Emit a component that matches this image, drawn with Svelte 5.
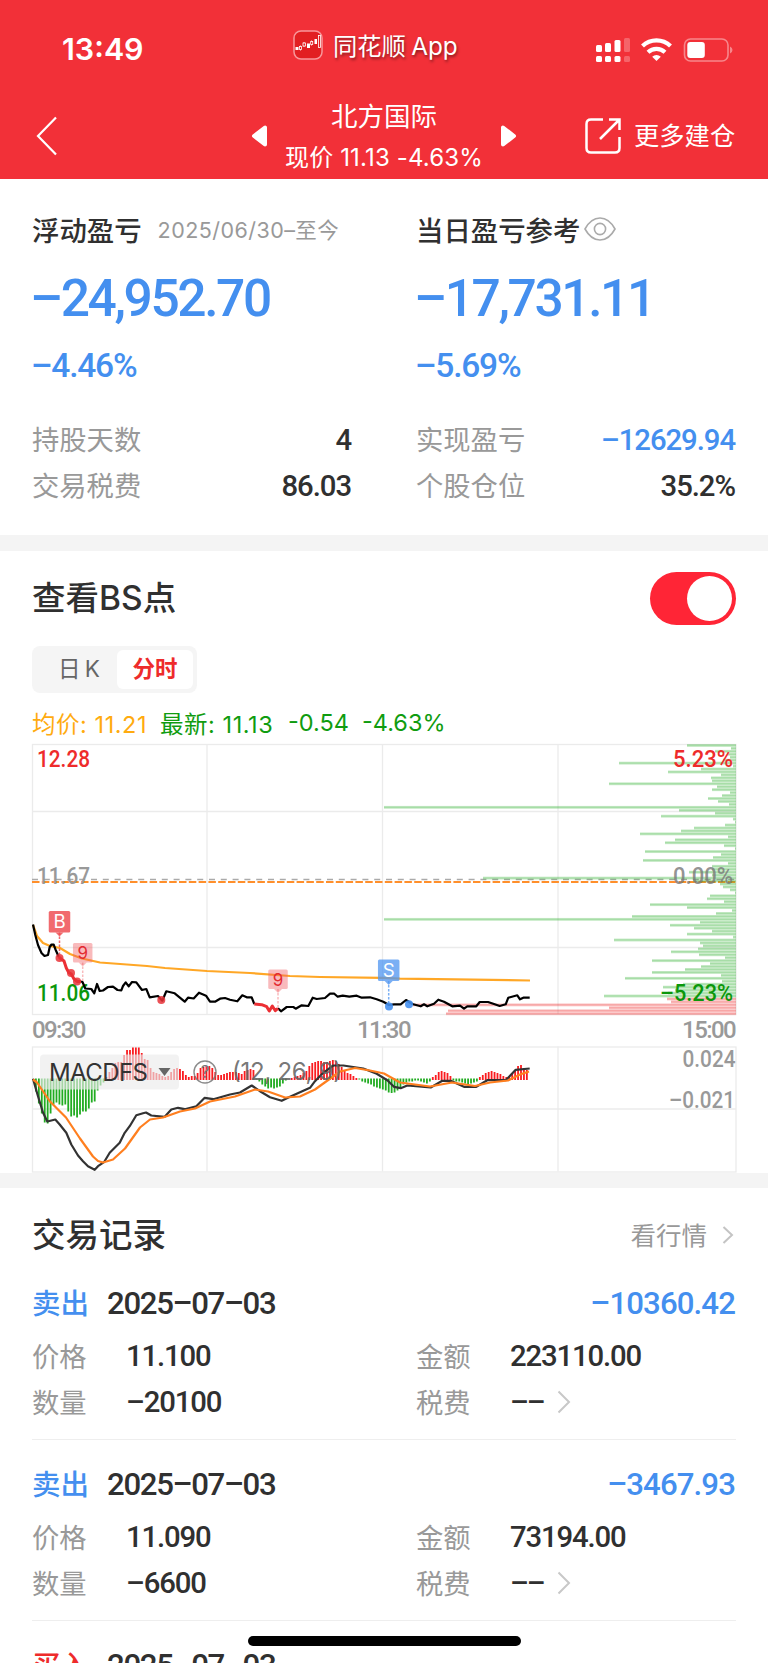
<script lang="ts">
    let bsOn = $state(true);
    let period = $state('分时');

    const summary = [
        { title: '浮动盈亏', range: '2025/06/30–至今', amount: '–24,952.70', rate: '–4.46%' },
        { title: '当日盈亏参考', range: '', amount: '–17,731.11', rate: '–5.69%' },
    ];

    const stats = [
        { label: '持股天数', value: '4', loss: false },
        { label: '实现盈亏', value: '–12629.94', loss: true },
        { label: '交易税费', value: '86.03', loss: false },
        { label: '个股仓位', value: '35.2%', loss: false },
    ];

    const records = [
        { side: '卖出', date: '2025–07–03', profit: '–10360.42', price: '11.100', amount: '223110.00', count: '–20100' },
        { side: '卖出', date: '2025–07–03', profit: '–3467.93', price: '11.090', amount: '73194.00', count: '–6600' },
        { side: '买入', date: '2025–07–03', profit: '', price: '', amount: '', count: '' },
    ];

    // volume at each price level, top to bottom
    const levels = [
        49, 5, 21, 9, 6, 13, 117, 3, 35, 68, 15, 25, 24, 127, 19, 24, 6, 14, 28, 18, 7, 352, 57, 21, 75, 3, 1, 11, 42, 55,
        96, 8, 61, 71, 12, 1, 91, 15, 23, 93, 8, 24, 24, 47, 24, 253, 43, 16, 13, 6, 1, 26, 29, 12, 86, 49, 4, 20, 104,
        352, 36, 66, 42, 24, 49, 3, 122, 36, 33, 38, 65, 37, 11, 84, 26, 35, 51, 84, 15, 111, 14, 53, 73, 61, 68, 132,
        69, 65, 323, 127, 288, 290,
    ];
    const firstRedLevel = 86;

    const macd = [
        -13, -25, -35, -44, -45, -35, -26, -24, -26, -27, -26, -33, -38, -37, -39, -36, -33, -33, -30, -24, -23, -12, -7, -4,
        3, 8, 12, 17, 18, 18, 25, 30, 30, 32.5, 32.5, 32.5, 27, 21, 20, 12, 8, 7, 6, 4, 3, 4, 8, 11, 12, 11, 9, 5, 3, 4, 4,
        7, 12, 13, 14, 14, 12, 8, 5, 5, 6, 7, 8, 8, 8, 7, 6, 9, 10, 11, 10, -1, -3, -6, -8, -10, -9, -10, -9, -8, -5, -2, 0,
        2, 3, 4, 5, 7, 9, 14, 17, 18, 19, 19, 18, 18, 19, 20, 19, 16, 13, 9, 7, 6, 4, 2, -1, -3, -4, -5, -6, -8, -9, -10,
        -11, -12, -14, -14.5, -14, -12, -9, -6, -4, -3, -3, -2, -2, -3, -4, -5, -3, 3, 5, 8, 9, 8, 7, 4, -2, -3, -3, -4,
        -5, -6, -5, -4, -3, 3, 5, 7, 8, 9, 8, 7, 6, 4, 3, 3, 7, 10, 14, 15, 12, 10,
    ];

    const priceStart = '33,924.5 35.3,935 38,945 41.5,953 44.5,956 48,955 49.7,947 51.5,944.5 53.7,944.7 55.5,949.5 58.7,956.7';
    const priceDrop = '58.7,956.7 60.5,958.5 64,961 66.3,968 68.7,972.5 71.3,974 74,979 77.3,981.5 81,981.5';
    const priceMid =
        '81,981.5 82.5,982 85.3,988.5 91.3,989 94.3,993.3 97,984 99.7,991 103,990.5 108,987 113,986.7 117.5,990 121.3,990.3 123,986 125.7,982.3 128.7,986.3 132,982 136.3,982.3 142,990 146.3,989 149.7,997.3 158,996 162.3,1000.7 166.3,991.3 174.7,993.3 184.7,1001.7 188,997.7 193.7,998.5 199,992.7 206,995.7 210,1001.7 215,1001.7 220,998.7 225,998 230,999.7 237.3,1001.3 242.3,995.3 246.7,997.3 251.7,997.3 254.3,1004';
    const priceLow = '254.3,1004 261.7,1004.7 266.7,1006.7 269.3,1011 272.3,1006 275.3,1010.7 278,1008.3';
    const priceEnd =
        '278,1008.3 281,1011.3 286.7,1007 293.3,1007 295.7,1008.7 301.7,1005.3 308.3,1006 312.7,997.7 316.7,999 325,998 330,993.7 334.3,993.7 337.7,996.7 342.7,995.7 349.3,996.7 356.7,995.7 361.7,997.7 370,997.3 376.7,999.3 383.3,1001.7 389,1005 394,1004.3 400.7,1004.3 406,1000 412.3,1004 420.7,1006.3 424,1004.3 427.3,1006.3 434,1003.7 438.3,999.7 444,1001.7 452.3,1006.3 460,1005.7 464,1008.7 467.3,1006.3 476.3,1006.3 479.7,1002 488,1002 494,1004 499.7,1006 505.7,1004.3 508.3,997.7 517.3,995.3 520,999.3 523.3,997.7 529.7,997.7';
    const average =
        '33,925 37,936 43,943 50,946 60,948 70,954 82,958.5 100,962.5 147,966 165,968 207,971 250,973 290,976 320,977 382,977.8 400,978.7 530,980.5';
    const dif =
        '33,1079.3 38,1096.7 43,1113 47.3,1122 55.3,1120 59.7,1125 66.3,1133.3 71.3,1145 78,1156 83,1161.7 88,1166.7 94.7,1170.3 98,1166.7 104,1162.7 109.7,1153.3 119.7,1143.3 124.7,1133.3 129.7,1126.7 136.3,1115.7 143,1113.7 146,1113 151.3,1116 164.7,1117.3 171.3,1110 178,1108.3 184.7,1109.7 196.3,1106.7 204.7,1098.3 213.3,1099.7 230,1095 240,1093 251.7,1086 260,1091.7 270,1097.7 281.7,1101.3 290,1097.3 310,1088.3 315,1081.7 323.3,1073.3 333.3,1066 343.3,1066 363.3,1069 376.7,1074.3 387.3,1080.7 394,1087.3 400.7,1088.7 407.3,1086 430.7,1088 442.3,1081.3 450.7,1081.3 464,1087.3 476.3,1087.3 487.3,1080.7 505.7,1080.7 515.7,1070.3 529.7,1069';
    const dea =
        '33,1080 37,1083 50,1102 66,1118 80,1139 93,1157 98,1161.5 103,1163 113,1160 125,1149 140,1128 150,1120 163,1118 180,1112 195,1109 210,1102 235,1097 255,1090 268,1092 285,1098 300,1097 315,1090 340,1072 355,1068.5 370,1071 384,1074 400,1083 430,1087 452,1083 475,1086.5 490,1083 508,1081 520,1075 529,1072';
</script>

{#snippet flag(x, y, size, color, textColor, label, end)}
    <line x1={x} x2={x} y1={y + size} y2={end} stroke={color} stroke-width="1.5" stroke-dasharray="2.5 1.5" />
    <rect x={x - size / 2} {y} width={size} height={size} rx="1.5" fill={color} />
    <path d="M{x - 4} {y + size}h8l-4 4z" fill={color} />
    <text {x} y={y + size / 2 + 6.5} text-anchor="middle" font-size={size * 0.87} fill={textColor}>{label}</text>
{/snippet}

<div class="page">
    <header>
        <div class="status">
            <span class="time">13:49</span>
            <div class="app">
                <svg width="30" height="30" viewBox="0 0 30 30">
                    <rect x="1" y="1" width="28" height="28" rx="7" fill="#e21f22" stroke="#f8979a" stroke-width="1.5" />
                    <g fill="#fff">
                        <rect x="2.5" y="17" width="3" height="3" />
                        <rect x="14" y="13.5" width="3" height="4.5" />
                        <rect x="21.5" y="9" width="2.5" height="5" />
                    </g>
                    <g fill="none" stroke="#fff" stroke-width=".8">
                        <path d="M7.5 15.5v5M11 12v5M18.5 10.5v5" />
                        <rect x="6.5" y="16.5" width="2" height="3" fill="#e21f22" />
                        <rect x="10" y="13" width="2.5" height="3" fill="#e21f22" />
                        <rect x="17.7" y="11.5" width="2" height="3" fill="#e21f22" />
                        <rect x="25.5" y="5.5" width="2" height="12" />
                    </g>
                </svg>
                <span>同花顺 App</span>
            </div>
            <svg class="signals" width="138" height="26" viewBox="594 36 138 26">
                <g fill="#fff">
                    <rect x="595" y="44" width="6" height="7" rx="1.5" />
                    <rect x="604" y="42" width="6" height="9" rx="1.5" />
                    <rect x="613.5" y="39" width="6" height="12" rx="1.5" />
                    <rect x="595" y="55" width="6" height="6" rx="1.5" />
                    <rect x="604" y="55" width="6" height="6" rx="1.5" />
                    <rect x="613.5" y="55" width="6" height="6" rx="1.5" />
                    <g opacity=".25">
                        <rect x="623" y="37" width="6" height="14" rx="1.5" />
                        <rect x="623" y="55" width="6" height="6" rx="1.5" />
                    </g>
                    <path d="M655.5 60l-4.3-4.300a6.5 6.5 0 0 1 8.6 0z" />
                    <rect x="686.3" y="41" width="17.5" height="16" rx="3" />
                </g>
                <path d="M641.5 45a20.3 20.3 0 0 1 28 0M647 51.2a12.5 12.5 0 0 1 17 0" fill="none" stroke="#fff" stroke-width="4.2" />
                <rect x="683.5" y="38" width="43.5" height="22" rx="6" fill="none" stroke="#fff" stroke-opacity=".42" stroke-width="1.6" />
                <path d="M729 45.5v7q2.5-1 2.5-3.500t-2.500-3.500z" fill="#fff" opacity=".42" />
            </svg>
        </div>
        <nav>
            <svg class="back" width="24" height="42" viewBox="0 0 24 42"><path d="M21 2.5L3 21l18 18.5" fill="none" stroke="#fff" stroke-width="2.2" /></svg>
            <div class="stock">
                <svg width="18" height="24" viewBox="0 0 18 24"><path d="M14 3.500v17L3 12z" fill="#fff" stroke="#fff" stroke-width="4" stroke-linejoin="round" /></svg>
                <div class="name">
                    <div class="title">北方国际</div>
                    <div class="quote">现价 11.13 -4.63%</div>
                </div>
                <svg width="18" height="24" viewBox="0 0 18 24"><path d="M4 3.500v17L15 12z" fill="#fff" stroke="#fff" stroke-width="4" stroke-linejoin="round" /></svg>
            </div>
            <div class="more">
                <svg width="38" height="38" viewBox="0 0 38 38" fill="none" stroke="#fff" stroke-width="2.5">
                    <path d="M19 2.500H7Q2.500 2.500 2.500 7v24q0 4.500 4.500 4.500h24q4.500 0 4.500-4.500V20M25 2.500h10.500V13M35 3L16 22" />
                </svg>
                <span>更多建仓</span>
            </div>
        </nav>
    </header>

    <section class="summary">
        <div class="cols">
            {#each summary as item}
                <div class="card">
                    <div class="head">
                        <b>{item.title}</b>
                        {#if item.range}
                            <span>{item.range}</span>
                        {:else}
                            <svg width="32" height="24" viewBox="0 0 32 24" fill="none" stroke="#aaa" stroke-width="1.6">
                                <path d="M1 12Q7 1 16 1t15 11Q25 23 16 23T1 12z" />
                                <circle cx="16" cy="12" r="5.6" />
                            </svg>
                        {/if}
                    </div>
                    <div class="amount">{item.amount}</div>
                    <div class="rate">{item.rate}</div>
                </div>
            {/each}
        </div>
        <div class="stats">
            {#each stats as item}
                <div class="stat">
                    <span class="label">{item.label}</span>
                    <span class="num" class:loss={item.loss}>{item.value}</span>
                </div>
            {/each}
        </div>
    </section>

    <section class="chart">
        <div class="chart-head">
            <h2>查看BS点</h2>
            <button class="toggle" class:on={bsOn} aria-label="BS" onclick={() => (bsOn = !bsOn)}><i></i></button>
        </div>
        <div class="tabs">
            {#each ['日 K', '分时'] as tab}
                <button class:active={period === tab} onclick={() => (period = tab)}>{tab}</button>
            {/each}
        </div>
        <div class="legend">
            <span class="avg">均价: 11.21</span>
            <span class="last">最新: 11.13</span>
            <span class="diff">-0.54</span>
            <span>-4.63%</span>
        </div>

        <svg class="plot" width="706" height="272" viewBox="31 744 706 272">
            <g fill="none" stroke="#ebebeb" stroke-width="1.3">
                <rect x="32.5" y="744.5" width="703.5" height="270" />
                <path d="M207 744v271M382.5 744v271M558 744v271M32 811.5h704M32 947.5h704" />
            </g>
            <line x1="32" x2="736" y1="879.5" y2="879.5" stroke="#aaa" stroke-width="1.7" stroke-dasharray="6 5.8" />
            <line x1="32" x2="736" y1="882" y2="882" stroke="#ff8f2b" stroke-width="2" stroke-dasharray="7.5 2.3" />
            {#each levels as width, i}
                <g fill={i < firstRedLevel ? '#32b032' : '#ef3030'}>
                    <rect x={736 - width} y={744 + i * 2.948} {width} height="2.9" opacity=".27" />
                    <rect x={736 - width} y={744.7 + i * 2.948} {width} height="1.4" opacity=".22" />
                </g>
            {/each}
            <g class="axis" font-size="24">
                <text x="37" y="767" textLength="53" lengthAdjust="spacingAndGlyphs" fill="#ee2b2b">12.28</text>
                <text x="37" y="884" textLength="53" lengthAdjust="spacingAndGlyphs" fill="#999">11.67</text>
                <text x="37" y="1000.5" textLength="53" lengthAdjust="spacingAndGlyphs" fill="#0b970b">11.06</text>
                <text x="673" y="767" textLength="60" lengthAdjust="spacingAndGlyphs" fill="#ee2b2b">5.23%</text>
                <text x="673" y="884" textLength="60" lengthAdjust="spacingAndGlyphs" fill="#777" fill-opacity=".8">0.00%</text>
                <text x="660" y="1000.5" textLength="73" lengthAdjust="spacingAndGlyphs" fill="#0b970b">–5.23%</text>
            </g>
            <polyline class="line" points={average} stroke="#ffa726" />
            <g class="line" stroke="#000">
                <polyline points={priceStart} />
                <polyline points={priceMid} />
                <polyline points={priceEnd} />
            </g>
            <g class="line red" stroke="#ec2f34">
                <polyline points={priceDrop} />
                <polyline points={priceLow} />
            </g>
            <g fill="#e73338" fill-opacity=".85">
                <circle cx="59.5" cy="958" r="4" />
                <circle cx="71" cy="973" r="4" />
                <circle cx="77" cy="981.5" r="4" />
                <circle cx="161.3" cy="1000" r="4" />
            </g>
            <g fill="#4590ef" fill-opacity=".9">
                <circle cx="389" cy="1006.5" r="4" />
                <circle cx="409" cy="1004.3" r="4" />
            </g>
            {#if bsOn}
                {@render flag(59.5, 911, 21.5, 'rgba(238,78,82,.84)', '#fff', 'B', 955)}
                {@render flag(82.7, 943, 19.5, 'rgba(240,90,95,.42)', '#e32a30', '9', 981)}
                {@render flag(278, 969.5, 19.5, 'rgba(240,90,95,.42)', '#e32a30', '9', 1008)}
                {@render flag(388.7, 959.5, 21.5, 'rgba(80,150,240,.76)', '#fff', 'S', 1003)}
            {/if}
        </svg>

        <div class="times"><span>09:30</span><span>11:30</span><span>15:00</span></div>

        <svg class="plot" width="706" height="127" viewBox="31 1046.5 706 127">
            <g fill="none" stroke="#ebebeb" stroke-width="1.3">
                <rect x="32.5" y="1047.5" width="703.5" height="125" />
                <path d="M207 1047v125M382.5 1047v125M558 1047v125M32 1109.5h704" />
            </g>
            {#each macd as v, i}
                <rect x={35 + i * 2.94} y={v > 0 ? 1080.5 - v : 1079} width="1.8" height={Math.abs(v)} fill={v > 0 ? '#fa1c20' : '#22ac22'} />
            {/each}
            <rect x="40" y="1055" width="139" height="35" rx="4" fill="#ebebeb" fill-opacity=".65" />
            <polyline class="line" points={dif} stroke="#333" />
            <polyline class="line" points={dea} stroke="#ff7f1f" />
            <text x="49" y="1081" font-size="24" textLength="99" fill="#333">MACDFS</text>
            <path d="M158.500 1068.500h12l-6 8z" fill="#666" />
            <circle cx="205" cy="1072.5" r="11" fill="none" stroke="#777" stroke-opacity=".85" stroke-width="1.4" />
            <text x="205" y="1078.5" font-size="17" text-anchor="middle" fill="#777">?</text>
            <text x="232" y="1080.5" font-size="24" textLength="110" fill="#666" fill-opacity=".9">(12, 26, 9)</text>
            <g class="axis" font-size="24" fill="#999">
                <text x="682.5" y="1067" textLength="53" lengthAdjust="spacingAndGlyphs">0.024</text>
                <text x="669" y="1108" textLength="66" lengthAdjust="spacingAndGlyphs">–0.021</text>
            </g>
        </svg>
    </section>

    <section class="records">
        <div class="records-head">
            <h2>交易记录</h2>
            <span class="link">
                看行情
                <svg width="12" height="20" viewBox="0 0 12 20"><path d="M1.500 2l8.500 8-8.500 8" fill="none" stroke="#c4c4c4" stroke-width="2" /></svg>
            </span>
        </div>
        {#each records as r}
            <article>
                <div class="deal">
                    <span class="side" class:buy={r.side === '买入'}>{r.side}</span>
                    <span class="date">{r.date}</span>
                    <span class="profit">{r.profit}</span>
                </div>
                {#if r.price}
                    <div class="fields">
                        <span>价格</span><b>{r.price}</b>
                        <span>金额</span><b>{r.amount}</b>
                        <span>数量</span><b>{r.count}</b>
                        <span>税费</span>
                        <b class="fee">––<svg width="14" height="24" viewBox="0 0 14 24"><path d="M1.500 1.500L12 12 1.500 22.500" fill="none" stroke="#c8c8c8" stroke-width="2" /></svg></b>
                    </div>
                {/if}
            </article>
        {/each}
    </section>

    <div class="home"></div>
</div>

<style>
    :global(body) {
        background: #fff;
    }

    .page {
        position: relative;
        width: 768px;
        height: 1663px;
        overflow: hidden;
        font-family: Inter, 'Noto Sans CJK SC', sans-serif;
        color: #303030;
    }

    h2 {
        margin: 0;
        padding-bottom: 5px;
        font-weight: 500;
        font-size: 33.5px;
    }

    button {
        border: 0;
        padding: 0;
        font-family: inherit;
    }

    header {
        height: 179px;
        background: #f23038;
        color: #fff;
    }

    .status {
        display: flex;
        align-items: center;
        height: 90px;
        padding: 0 35.5px 0 62px;
    }

    .time {
        width: 231px;
        padding-top: 8px;
        font-size: 30.4px;
        font-weight: 600;
    }

    .app {
        display: flex;
        align-items: center;
        gap: 10px;
        flex: 1;
        font-size: 24.3px;
        line-height: 30px;
        letter-spacing: -0.1px;
        word-spacing: -1px;
        text-shadow: 1px 2px 3px rgba(0, 0, 0, 0.45);
    }

    .app span {
        padding-top: 1px;
    }

    .signals {
        margin-top: 9px;
    }

    nav {
        display: grid;
        grid-template-columns: 214px 1fr 214px;
        height: 90px;
        align-items: center;
    }

    .back {
        margin: 1px 0 0 35px;
    }

    .stock {
        display: flex;
        align-items: center;
        justify-content: space-between;
        padding: 0 37px;
        margin-top: 2px;
    }

    .name {
        margin: 1px -20px 0;
        text-align: center;
        white-space: nowrap;
    }

    .title {
        font-size: 26.5px;
        line-height: 41px;
    }

    .quote {
        font-size: 24px;
        line-height: 41px;
        letter-spacing: 0.15px;
    }

    .more {
        display: flex;
        align-items: center;
        gap: 12px;
        margin: 1px 0 0 30px;
        font-size: 25.3px;
        line-height: 36px;
        white-space: nowrap;
    }

    .summary {
        height: 356px;
        padding: 0 32px;
    }

    .cols,
    .stats {
        display: grid;
        grid-template-columns: 320px 320px;
        column-gap: 64px;
    }

    .head {
        display: flex;
        align-items: center;
        height: 50px;
        margin-top: 24.5px;
    }

    .head b {
        font-size: 27.4px;
        font-weight: 500;
    }

    .head span {
        margin-left: 16px;
        font-size: 21.5px;
        color: #999;
        letter-spacing: 0.45px;
        white-space: nowrap;
    }

    .head svg {
        margin-left: 4px;
    }

    .amount,
    .rate,
    .num,
    .times,
    .date,
    .profit,
    .fields b {
        font-family: Roboto, sans-serif;
        font-weight: 500;
    }

    .amount {
        margin: 3px 0 0 -2px;
        color: #448fef;
        font-size: 51.5px;
        line-height: 84px;
        letter-spacing: -2.4px;
    }

    .rate {
        margin-left: -1px;
        color: #448fef;
        font-size: 33.5px;
        line-height: 50px;
        letter-spacing: -1.2px;
    }

    .stats {
        margin-top: 25px;
    }

    .stat {
        display: flex;
        justify-content: space-between;
        align-items: center;
        height: 46.5px;
        font-size: 27.3px;
        color: #999;
    }

    .label {
        padding-bottom: 2px;
    }

    .num {
        padding: 2px 1px 0 0;
        font-size: 29.3px;
        letter-spacing: -1.05px;
        color: #303030;
    }

    .num.loss {
        color: #448fef;
    }

    .chart {
        height: 622px;
        padding: 0 32px;
        border-top: 16px solid #f4f4f4;
        border-bottom: 15.5px solid #f4f4f4;
    }

    .chart-head {
        display: flex;
        align-items: center;
        justify-content: space-between;
        height: 94.5px;
    }

    .toggle {
        display: flex;
        width: 86px;
        height: 53px;
        padding: 4px;
        border-radius: 27px;
        background: #ccc;
    }

    .toggle.on {
        justify-content: flex-end;
        background: #ff2536;
    }

    .toggle i {
        width: 45.5px;
        height: 45.5px;
        border-radius: 50%;
        background: #fff;
    }

    .tabs {
        display: flex;
        width: 165px;
        height: 47px;
        padding: 4px;
        box-sizing: border-box;
        border-radius: 8px;
        background: #f5f5f5;
    }

    .tabs button {
        flex: 1;
        padding-left: 5px;
        border-radius: 6px;
        background: none;
        color: #666;
        font-size: 22.5px;
        line-height: 36px;
        word-spacing: -2px;
    }

    .tabs .active {
        padding-left: 0;
        background: #fff;
        color: #ee2b2b;
        font-weight: 700;
    }

    .legend {
        display: flex;
        height: 51px;
        align-items: center;
        padding-top: 9px;
        box-sizing: border-box;
        font-size: 23.5px;
        color: #109c10;
        white-space: nowrap;
    }

    .avg {
        width: 128px;
        letter-spacing: 0.55px;
        color: #ffab0f;
    }

    .last {
        width: 128px;
        letter-spacing: 0.55px;
    }

    .diff {
        width: 74px;
    }

    .plot {
        display: block;
        margin-left: -1px;
        overflow: visible;
        font-family: Inter, sans-serif;
    }

    .axis {
        font-family: Roboto, sans-serif;
        font-weight: 500;
    }

    .line {
        fill: none;
        stroke-width: 2.2;
        stroke-linejoin: round;
    }

    .red {
        stroke-width: 3;
    }

    .times {
        display: flex;
        justify-content: space-between;
        height: 30.5px;
        line-height: 29px;
        font-size: 24px;
        letter-spacing: -1.6px;
        color: #999;
    }

    .times span:last-child {
        padding-right: 1px;
    }

    .records {
        padding: 0 32px;
    }

    .records-head {
        display: flex;
        align-items: center;
        justify-content: space-between;
        height: 71px;
        padding-top: 23px;
        box-sizing: border-box;
    }

    .link {
        display: flex;
        align-items: center;
        gap: 15px;
        padding: 0 2px 4px 0;
        font-size: 25.5px;
        color: #999;
    }

    .link svg {
        margin-top: 4px;
    }

    article {
        height: 181px;
        padding-top: 24.5px;
        box-sizing: border-box;
        border-bottom: 1px solid #eee;
    }

    .deal {
        display: flex;
        align-items: center;
        height: 40px;
    }

    .side {
        width: 75px;
        font-size: 28.5px;
        line-height: 38px;
        font-weight: 500;
        color: #448fef;
    }

    .side.buy {
        color: #ee2b2b;
    }

    .date,
    .profit {
        font-size: 31.2px;
        letter-spacing: -1.35px;
    }

    .profit {
        margin-left: auto;
        padding-right: 1px;
        letter-spacing: -0.9px;
        color: #448fef;
    }

    .fields {
        display: grid;
        grid-template-columns: 94px 290px 94px 1fr;
        grid-auto-rows: 46.5px;
        align-items: center;
        margin-top: 8px;
        font-size: 27.3px;
        color: #999;
    }

    .fields b {
        padding-top: 2px;
        font-size: 29.3px;
        letter-spacing: -1.15px;
        color: #303030;
    }

    .fields .fee {
        display: flex;
        align-items: center;
        gap: 13px;
        letter-spacing: -2px;
    }

    .home {
        position: absolute;
        left: 248px;
        bottom: 17px;
        width: 273px;
        height: 10px;
        border-radius: 5px;
        background: #000;
    }
</style>
